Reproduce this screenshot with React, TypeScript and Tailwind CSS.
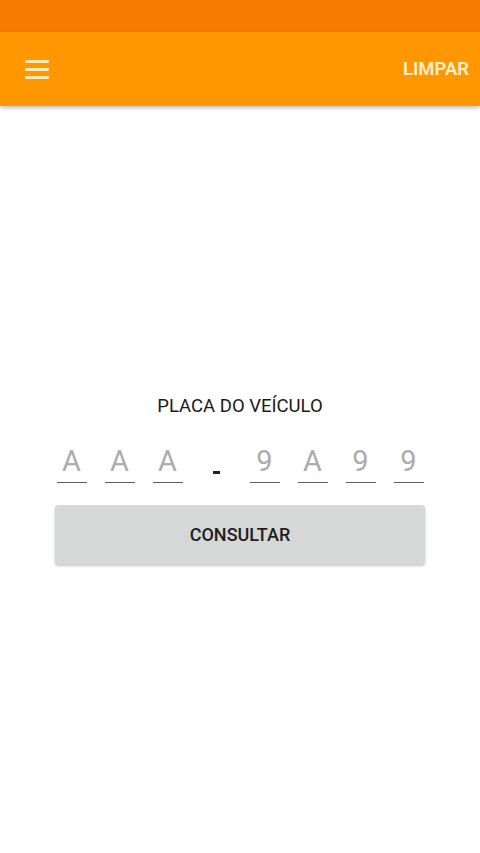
import React from "react";

const chars1 = ["A", "A", "A"];
const chars2 = ["9", "A", "9", "9"];

function Box({ c }: { c: string }) {
  return (
    <div className="flex w-[30px] flex-col items-center">
      <span className="h-[34px] text-[29px] font-normal leading-[34px] text-[#acacac]">{c}</span>
      <div className="mt-[4px] h-px w-[30px] bg-[#5f5f5f]" />
    </div>
  );
}

export default function App() {
  return (
    <div className="flex h-[853px] w-[480px] flex-col bg-white" style={{ fontFamily: "Roboto, 'Liberation Sans', sans-serif" }}>
      <div className="h-[32px] bg-[#f57c00]" />
      <div className="relative z-10 flex h-[74px] items-center justify-between bg-[#ff9800] pl-[25px] pr-[11px] shadow-[0_2px_4px_rgba(0,0,0,0.25)]">
        <div className="flex w-[24px] flex-col gap-[5px]">
          <div className="h-[3px] rounded-[1px] bg-[#ffe9b8]" />
          <div className="h-[3px] rounded-[1px] bg-[#ffe9b8]" />
          <div className="h-[3px] rounded-[1px] bg-[#ffe9b8]" />
        </div>
        <span className="mt-[2px] text-[18.5px] font-semibold text-[#fff0cc]">LIMPAR</span>
      </div>
      <div className="flex flex-col items-center pt-[288px]">
        <div className="text-[18.5px] leading-[24px] text-[#1a1a1a]">PLACA DO VEÍCULO</div>
        <div className="mt-[26px] flex items-start">
          <div className="flex gap-[18px]">
            {chars1.map((c, i) => (
              <Box key={i} c={c} />
            ))}
          </div>
          <div className="mx-[30px] mt-[27px] h-[3px] w-[7px] bg-[#222]" />
          <div className="flex gap-[18px]">
            {chars2.map((c, i) => (
              <Box key={i} c={c} />
            ))}
          </div>
        </div>
        <button className="mt-[22px] flex h-[59px] w-[370px] items-center justify-center rounded-[3px] bg-[#d6d8d8] text-[18px] font-medium text-[#1e1e1e] shadow-[0_2px_3px_rgba(0,0,0,0.22)]">
          CONSULTAR
        </button>
      </div>
    </div>
  );
}
